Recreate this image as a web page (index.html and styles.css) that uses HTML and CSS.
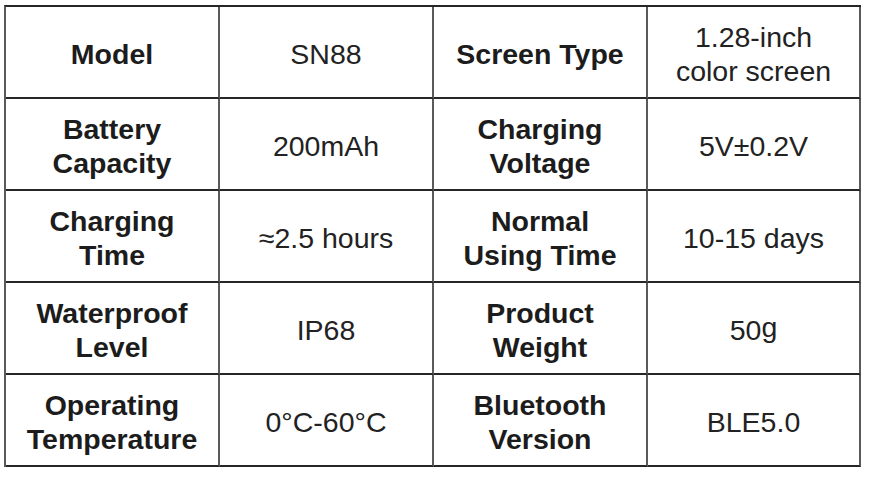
FILE: index.html
```
<!DOCTYPE html>
<html>
<head>
<meta charset="utf-8">
<link rel="stylesheet" href="styles.css">
</head>
<body>
<table class="spec">
<colgroup><col class="c1"><col class="c2"><col class="c3"><col class="c4"></colgroup>
<tr><th>Model</th><td>SN88</td><th>Screen Type</th><td>1.28-inch<br>color screen</td></tr>
<tr><th>Battery<br>Capacity</th><td>200mAh</td><th>Charging<br>Voltage</th><td>5V±0.2V</td></tr>
<tr><th>Charging<br>Time</th><td>≈2.5 hours</td><th>Normal<br>Using Time</th><td>10-15 days</td></tr>
<tr><th>Waterproof<br>Level</th><td>IP68</td><th>Product<br>Weight</th><td>50<span class="raised">g</span></td></tr>
<tr><th>Operating<br>Temperature</th><td>0°C-60°C</td><th>Bluetooth<br>Version</th><td>BLE5.0</td></tr>
</table>
</body>
</html>
```
FILE: styles.css
```
html, body {
  margin: 0;
  padding: 0;
  background: #ffffff;
}
.spec {
  margin: 5px 0 0 4px;
  border-collapse: separate;
  border-spacing: 0;
  table-layout: fixed;
  width: 857px;
  border-top: 2px solid #262626;
  border-left: 2px solid #5a5a5a;
  font-family: "Liberation Sans", Arial, sans-serif;
}
.c1, .c2, .c3 { width: 214px; }
.c4 { width: 213px; }
.spec th, .spec td {
  border-right: 2px solid #5a5a5a;
  border-bottom: 2px solid #262626;
  height: 92px;
  padding: 4px 0 0 0;
  text-align: center;
  vertical-align: middle;
  font-size: 28.5px;
  line-height: 34px;
  box-sizing: border-box;
}
.spec th {
  font-weight: bold;
  color: #1c1c1c;
}
.spec td {
  font-weight: normal;
  color: #222222;
}
.raised {
  position: relative;
  top: -3px;
}
```
